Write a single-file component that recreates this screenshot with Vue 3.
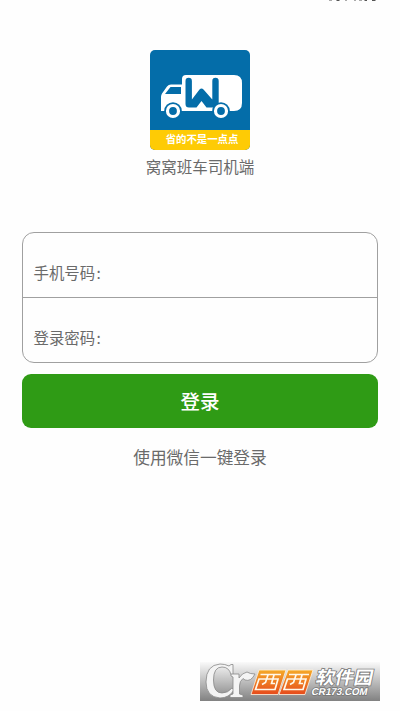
<script setup>
const fields = ['手机号码', '登录密码']
</script>

<template>
  <main class="screen">
    <svg class="cutoff" width="50" height="3" viewBox="0 0 50 3" aria-hidden="true">
      <path d="M1 .5h3M8 .5h4M17 .5h2M26 .5h2M31 .5h3M36 .5h3M44 .5h4" />
      <path class="dark" d="M9 .5h2M37 .5h2M44 .5h3" />
    </svg>
    <header class="brand">
      <div class="logo">
        <svg class="truck" width="100" height="80" viewBox="0 0 100 80">
          <path class="white" d="M32 29Q32 25 36 25H84Q92 25 92 33V53Q92 61 84 61H11V47Q11 45 12 43.500L17 36.500Q18.500 34.500 21 34.500H32Z" />
          <path class="blue" d="M20.500 37H31V44H15Z" />
          <path class="blue" d="M35.500 31a3.200 3.200 0 0 1 6.400 0V49.500L49.500 39.500Q51.500 37.500 53.500 39.500L62.300 49.500V31a3.200 3.200 0 0 1 6.400 0V54Q68.700 57.500 65 57.500H56.500L51.500 51L46.500 57.500H39Q35.500 57.500 35.500 54Z" />
          <circle class="blue" cx="23" cy="61" r="8.800" />
          <circle class="blue" cx="71" cy="61" r="8.800" />
          <circle class="wheel" cx="23" cy="61" r="5.500" />
          <circle class="wheel" cx="71" cy="61" r="5.500" />
        </svg>
        <div class="slogan">省的不是一点点</div>
      </div>
      <h1>窝窝班车司机端</h1>
    </header>
    <form class="form" @submit.prevent>
      <div class="fields">
        <label v-for="field in fields" :key="field" class="field">{{ field }}<span class="colon">:</span></label>
      </div>
      <button class="login">登录</button>
    </form>
    <a class="wechat">使用微信一键登录</a>
    <svg class="mark" width="180" height="39" viewBox="0 0 180 39">
      <defs>
        <linearGradient id="bg" x2="0" y2="1"><stop stop-color="#fafafa" /><stop offset="1" stop-color="#818181" /></linearGradient>
        <linearGradient id="orange" x2="0" y2="1"><stop stop-color="#f5aa28" /><stop offset="1" stop-color="#e64a1c" /></linearGradient>
      </defs>
      <rect width="180" height="39" fill="url(#bg)" />
      <g class="sprout">
        <path d="M33 2.500V12.500H31Q29 5 22 5Q13.500 5 13.500 18Q13.500 31 22 31Q28 31 32 26L34 28Q29 36 20 36Q6 35 6 20Q6 3 20 2Q25 2 29 4L31 2.500Z" />
        <path d="M31 12H39V16Q42 11 47 10Q50 12 55 12Q51 20 45 18L43 16.500Q39.500 19 39.500 24V32L43 33V35.500H30V33L33 32V15L31 14Z" />
      </g>
      <g class="tile">
        <path d="M59 8H86L78 32.500H51ZM88 8H113L105 32.500H79Z" />
        <path class="strokes" d="M60.500 12.500H81M59 17H78L75 27.500H55.500ZM68 13L65.500 20.500L62 22.500M74 13L71.500 21.500H75M89 12.500H109M87.500 17H106L103 27.500H84ZM96 13L93.500 20.500L90 22.500M102 13L99.500 21.500H103" />
      </g>
      <text class="name" transform="translate(115 21.500) skewX(-12)" textLength="57" lengthAdjust="spacingAndGlyphs">软件园</text>
      <text class="site" transform="translate(111 33) skewX(-12)" textLength="56" lengthAdjust="spacingAndGlyphs">CR173.COM</text>
    </svg>
  </main>
</template>

<style>
body {
  margin: 0;
  background: #fefefe;
}
</style>

<style scoped>
.screen {
  box-sizing: border-box;
  width: 400px;
  height: 711px;
  padding: 0 22px;
  display: flex;
  flex-direction: column;
  overflow: hidden;
  font-family: "Noto Sans CJK SC", sans-serif;
  color: #6a6a6a;
}
.cutoff {
  align-self: flex-end;
  flex: none;
  margin-bottom: 47px;
}
.cutoff path {
  stroke: #aaa;
  fill: none;
}
.cutoff .dark {
  stroke: #555;
}
.brand {
  display: flex;
  flex-direction: column;
  align-items: center;
}
.logo {
  width: 100px;
  height: 100px;
  border-radius: 5px;
  overflow: hidden;
  background: #046da9;
}
.truck {
  display: block;
}
.white {
  fill: #fff;
}
.blue {
  fill: #046da9;
}
.wheel {
  fill: #046da9;
  stroke: #fff;
  stroke-width: 3.2;
}
.slogan {
  height: 20px;
  padding-left: 4px;
  background: #fecb05;
  color: #fff;
  font-size: 10.4px;
  font-weight: 700;
  line-height: 18px;
  text-align: center;
  white-space: nowrap;
}
h1 {
  margin: 5px 0 0;
  font-size: 15.5px;
  font-weight: 400;
  line-height: 23px;
}
.form {
  margin-top: 54px;
}
.fields {
  box-sizing: border-box;
  height: 131px;
  border: 1px solid #a0a0a0;
  border-radius: 12px;
}
.field {
  box-sizing: border-box;
  display: block;
  height: 64px;
  padding: 28px 0 0 10.500px;
  font-size: 15.4px;
  line-height: 23px;
}
.field + .field {
  border-top: 1px solid #a0a0a0;
}
.colon {
  margin-left: 1.500px;
}
.login {
  display: block;
  width: 356px;
  height: 54px;
  margin-top: 11px;
  padding: 0 0 2px;
  border: 0;
  border-radius: 9px;
  background: #2f9b15;
  color: #fff;
  font: 500 19.5px "Noto Sans CJK SC", sans-serif;
}
.wechat {
  margin-top: 17px;
  font-size: 16.7px;
  line-height: 24px;
  text-align: center;
}
.mark {
  flex: none;
  margin: 193px 0 0 178px;
}
.sprout {
  fill: #f4f4f4;
  stroke: #888;
  stroke-width: 0.8;
}
.tile {
  fill: url(#orange);
  stroke: #fff3df;
  stroke-width: 0.8;
}
.tile .strokes {
  fill: none;
  stroke: #fff8ea;
  stroke-width: 1.7;
}
.name,
.site {
  fill: #fff;
  stroke: #777;
  stroke-width: 1.5;
  paint-order: stroke;
  font-weight: 700;
}
.name {
  font-size: 18px;
}
.site {
  font-family: "Liberation Sans", sans-serif;
  font-size: 10px;
}
</style>
